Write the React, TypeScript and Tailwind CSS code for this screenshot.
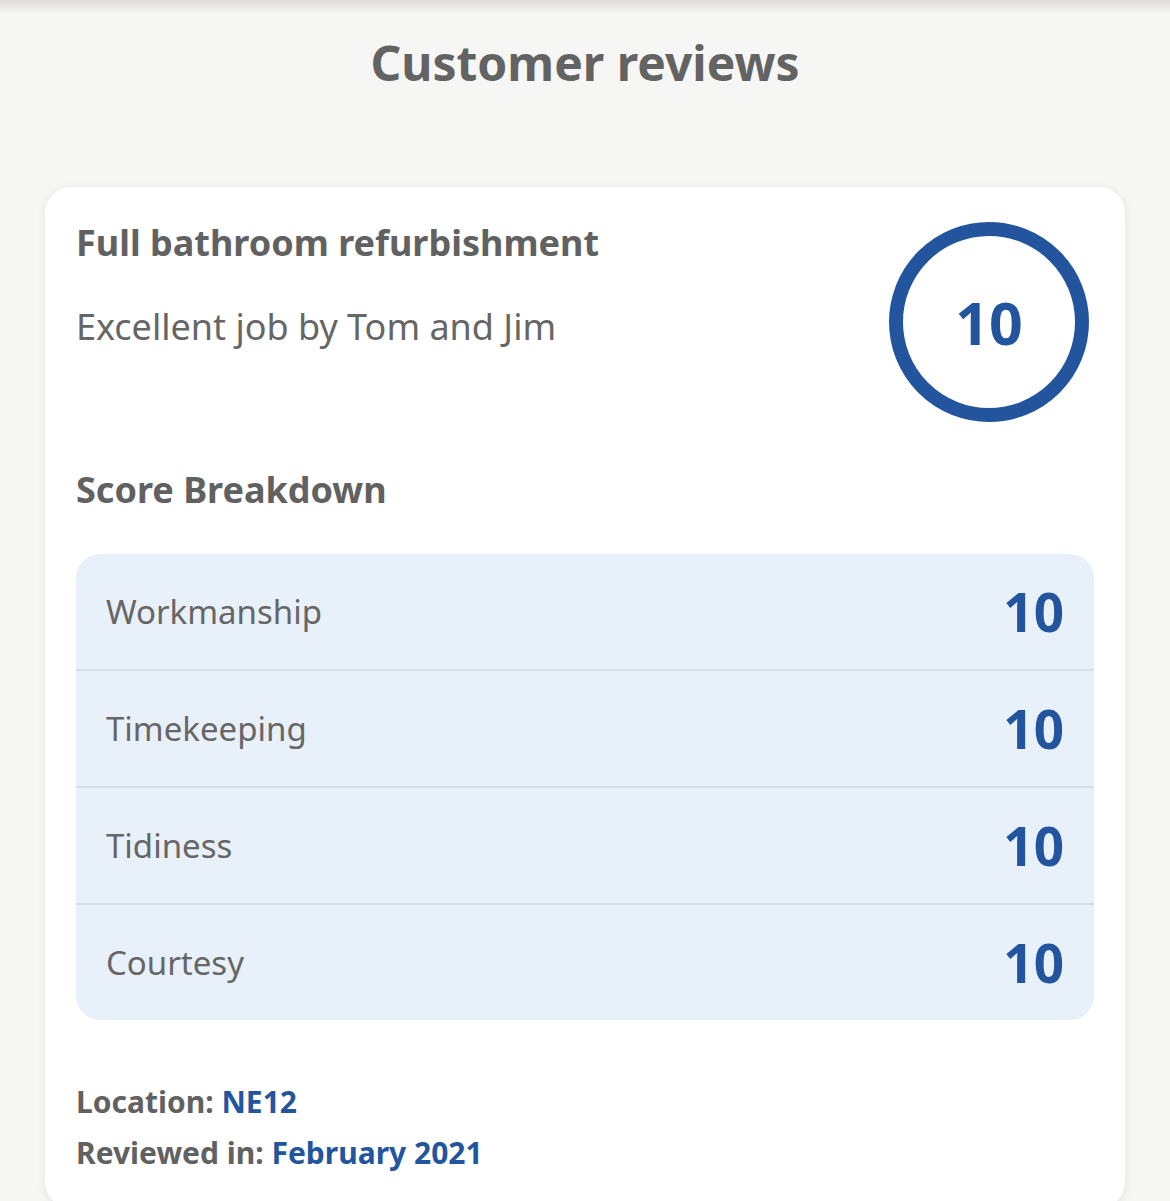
import React from "react";

const rows = [
  { label: "Workmanship", score: 10 },
  { label: "Timekeeping", score: 10 },
  { label: "Tidiness", score: 10 },
  { label: "Courtesy", score: 10 },
];

export default function App() {
  return (
    <div
      className="relative w-[1170px] h-[1201px] overflow-hidden bg-[#f6f6f5]"
      style={{ fontFamily: '"Noto Sans", "Open Sans", sans-serif' }}
    >
      <div className="absolute left-0 top-0 w-full h-[14px] bg-gradient-to-b from-[#dedddc] to-[#f6f6f5]" />
      <div className="pt-[28px] flex justify-center">
        <h1 className="text-[48px] leading-[69px] font-bold text-[#636363]">Customer reviews</h1>
      </div>
      <div className="mt-[90px] mx-[45px] bg-white rounded-[26px] shadow-[0_2px_10px_rgba(0,0,0,0.08)] px-[31px] pt-[32px] pb-[30px]">
        <div className="flex items-start justify-between">
          <div className="flex flex-col">
            <h2 className="text-[36px] leading-[48px] font-bold text-[#616161]">Full bathroom refurbishment</h2>
            <p className="mt-[36px] text-[36px] leading-[48px] text-[#666666]">Excellent job by Tom and Jim</p>
          </div>
          <div className="mt-[3px] mr-[5px] w-[200px] h-[200px] rounded-full border-[14px] border-[#23559f] flex items-center justify-center">
            <span className="text-[59px] font-bold text-[#23559f] leading-none">10</span>
          </div>
        </div>
        <h3 className="mt-[44px] text-[36px] leading-[48px] font-bold text-[#616161]">Score Breakdown</h3>
        <div className="mt-[40px] bg-[#e8f0f9] rounded-[24px] overflow-hidden">
          {rows.map((r, i) => (
            <div
              key={r.label}
              className={
                "h-[115px] flex items-center justify-between pl-[30px] pr-[30px] " +
                (i > 0 ? "border-t-2 border-[#d6dee8] box-content" : "")
              }
            >
              <span className="text-[33px] text-[#666666]">{r.label}</span>
              <span className="text-[53px] font-bold text-[#23559f] leading-none">{r.score}</span>
            </div>
          ))}
        </div>
        <div className="mt-[56px] text-[30px] leading-[51px] font-bold text-[#616161]">
          Location: <span className="text-[#23559f]">NE12</span>
        </div>
        <div className="text-[30px] leading-[51px] font-bold text-[#616161]">
          Reviewed in: <span className="text-[#23559f]">February 2021</span>
        </div>
      </div>
    </div>
  );
}
